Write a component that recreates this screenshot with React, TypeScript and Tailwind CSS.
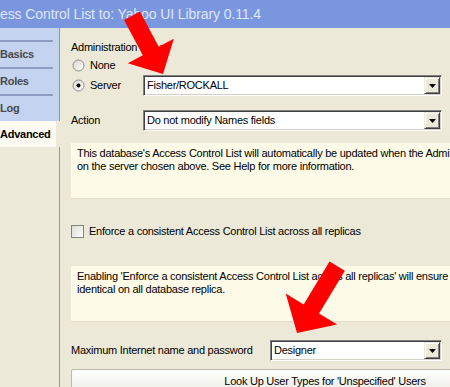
import React from "react";

type Pt = [number, number];

// block arrow: tip point, direction in degrees, head length/half-width, shaft half-width/length
function arrowPoints(tip: Pt, deg: number, H: number, W: number, w: number, L: number) {
  const r = (deg * Math.PI) / 180;
  const d: Pt = [Math.cos(r), Math.sin(r)];
  const n: Pt = [-d[1], d[0]];
  const b: Pt = [tip[0] - d[0] * H, tip[1] - d[1] * H];
  const p = (base: Pt, k: number, back: number): Pt => [
    base[0] + n[0] * k - d[0] * back,
    base[1] + n[1] * k - d[1] * back,
  ];
  const pts: Pt[] = [tip, p(b, W, 0), p(b, w, 0), p(b, w, L), p(b, -w, L), p(b, -w, 0), p(b, -W, 0)];
  return pts.map((q) => `${q[0].toFixed(1)},${q[1].toFixed(1)}`).join(" ");
}

function DropButton() {
  return (
    <div className="flex h-[17px] w-[16px] shrink-0 items-center justify-center border border-t-[#ece9d8] border-l-[#ece9d8] border-r-[#404040] border-b-[#404040] bg-[#ece9d8] shadow-[inset_1px_1px_0_#ffffff,inset_-1px_-1px_0_#808080]">
      <svg width="7" height="4" viewBox="0 0 7 4">
        <path d="M0 0h7L3.5 4z" fill="#000" />
      </svg>
    </div>
  );
}

function Combo({ value, width }: { value: string; width: string }) {
  return (
    <div
      className={`flex h-[21px] ${width} shrink-0 items-center border border-t-[#808080] border-l-[#808080] border-r-white border-b-white bg-white p-px shadow-[inset_1px_1px_0_#404040,inset_-1px_-1px_0_#d4d0c8]`}
    >
      <span className="flex-1 pl-[2px] whitespace-nowrap">{value}</span>
      <DropButton />
    </div>
  );
}

function Radio({ checked }: { checked?: boolean }) {
  return (
    <svg width="13" height="13" viewBox="0 0 13 13" className="shrink-0">
      <defs>
        <linearGradient id="rg" x1="0" y1="0" x2="1" y2="1">
          <stop offset="0" stopColor="#d9d7cf" />
          <stop offset="1" stopColor="#ffffff" />
        </linearGradient>
      </defs>
      <circle cx="6.5" cy="6.5" r="5.5" fill="url(#rg)" stroke="#8c8b85" />
      {checked && <circle cx="6.5" cy="6.5" r="2" fill="#000" />}
    </svg>
  );
}

const tabs = ["Basics", "Roles", "Log"];

export default function App() {
  return (
    <div className="relative flex h-[387px] w-[450px] flex-col overflow-hidden bg-[#ece9d8] font-['Liberation_Sans',Arial,sans-serif] text-[11px] tracking-[-0.25px] text-black">
      {/* title bar */}
      <div className="flex h-[28px] shrink-0 items-center whitespace-nowrap bg-[#7a96df] text-[14px] tracking-[-0.1px] text-[#dfe6f8]">
        ess Control List to: Yahoo UI Library 0.11.4
      </div>

      <div className="flex min-h-0 flex-1">
        {/* tabs */}
        <div className="flex w-[60px] shrink-0 flex-col">
          <div className="h-[93px] border-r border-[#7f9db9] bg-[#c3d3f0] pt-[12px]">
            {tabs.map((t) => (
              <div
                key={t}
                className="flex h-[27px] w-[53px] items-center border-t-2 border-[#8e9fc2] font-bold text-[#4a4a4a]"
              >
                {t}
              </div>
            ))}
          </div>
          <div className="flex h-[26px] w-[56px] items-center bg-[#fdfbf1] font-bold">Advanced</div>
          <div className="flex-1 border-r border-[#7f9db9]" />
        </div>

        {/* panel */}
        <div className="flex min-w-0 flex-1 flex-col pl-[11px]">
          <div className="mt-[12px] h-[14px] leading-[14px]">Administration Server</div>
          <div className="mt-[4px] flex h-[14px] items-center gap-[5px] pl-px">
            <Radio />
            <span>None</span>
          </div>
          <div className="mt-[3px] flex h-[21px] items-center">
            <div className="flex w-[72px] items-center gap-[5px] pl-px">
              <Radio checked />
              <span>Server</span>
            </div>
            <Combo value="Fisher/ROCKALL" width="w-[299px]" />
          </div>
          <div className="mt-[14px] flex h-[21px] items-center">
            <div className="w-[72px]">Action</div>
            <Combo value="Do not modify Names fields" width="w-[299px]" />
          </div>

          <div className="mt-[12px] h-[56px] w-[540px] shrink-0 whitespace-nowrap border-b border-[#e2dec9] bg-[#fefae8] px-[6px] pt-[4px] leading-[13px]">
            <div>This database's Access Control List will automatically be updated when the Administration Server</div>
            <div>on the server chosen above. See Help for more information.</div>
          </div>

          <div className="mt-[25px] flex h-[14px] items-center gap-[5px]">
            <div className="h-[13px] w-[13px] shrink-0 border border-[#85847e] bg-linear-to-br from-[#dcdad2] to-white" />
            <span>Enforce a consistent Access Control List across all replicas</span>
          </div>

          <div className="mt-[28px] h-[56px] w-[540px] shrink-0 whitespace-nowrap border-b border-[#e2dec9] bg-[#fefae8] px-[6px] pt-[4px] leading-[13px]">
            <div>Enabling 'Enforce a consistent Access Control List across all replicas' will ensure that it is</div>
            <div>identical on all database replica.</div>
          </div>

          <div className="mt-[18px] flex h-[21px] items-center">
            <div className="w-[199px]">Maximum Internet name and password</div>
            <Combo value="Designer" width="w-[172px]" />
          </div>

          <button className="mt-[8px] h-[24px] w-[508px] shrink-0 rounded-[2px] border border-[#bcb9a8] bg-linear-to-b from-white to-[#ecebe4] text-center">
            Look Up User Types for 'Unspecified' Users
          </button>
        </div>
      </div>

      {/* red annotation arrows */}
      <svg className="pointer-events-none absolute inset-0" width="450" height="387" viewBox="0 0 450 387">
        <polygon points={arrowPoints([163, 74], 62, 26, 26, 9, 40)} fill="#ff0000" />
        <polygon points={arrowPoints([297, 333], 121, 28, 30, 9, 50)} fill="#ff0000" />
      </svg>
    </div>
  );
}
